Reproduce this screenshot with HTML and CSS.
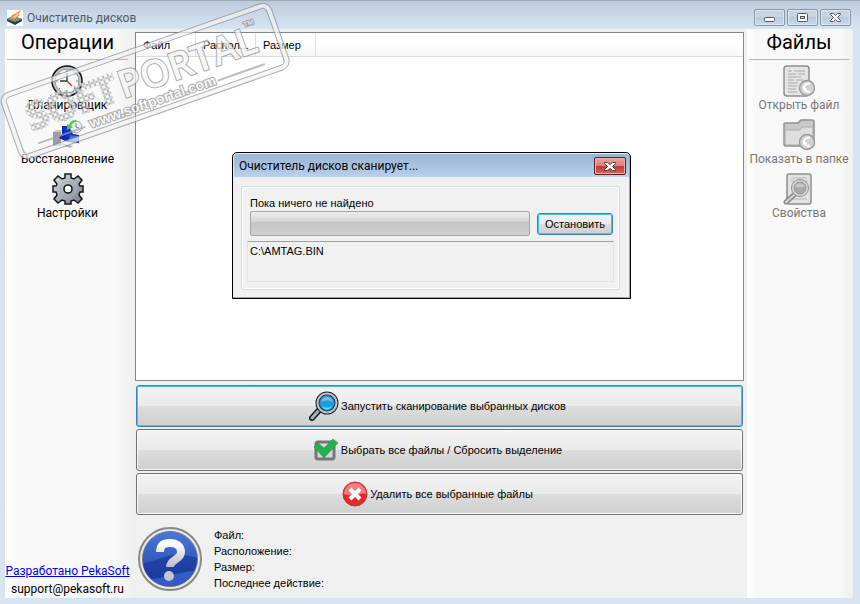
FILE: index.html
```html
<!DOCTYPE html>
<html lang="ru">
  <head>
    <meta charset="UTF-8" />
    <meta name="viewport" content="width=device-width, initial-scale=1.0" />
    <title>Очиститель дисков</title>
    <link rel="stylesheet" href="styles.css">
  </head>
  <body>
    <div class="window">
      <header class="titlebar">
        <svg class="app-icon" width="16" height="16" viewBox="0 0 16 16">
          <rect width="16" height="16" fill="#fff" />
          <path d="M0 9l6-3 9 3v2l-7 4-8-4z" fill="#2f3b40" />
          <path d="M0 9l6-3 9 3-7 3z" fill="#7d9390" />
          <path d="M4 9l1-4 4-2 5-3-2 4 1 1-5 4z" fill="#f0953a" />
          <path d="M6 7l5-4 1 1-4 4z" fill="#fbd58a" />
        </svg>
        <h1 class="title">Очиститель дисков</h1>
        <div class="controls">
          <button type="button" class="control" aria-label="Свернуть">
            <svg width="29" height="15" viewBox="0 0 29 15">
              <rect x="9.500" y="7.500" width="10" height="4" rx="1" fill="#fff" stroke="#535666" />
            </svg>
          </button>
          <button type="button" class="control" aria-label="Развернуть">
            <svg width="29" height="15" viewBox="0 0 29 15">
              <rect x="9.500" y="3.500" width="10" height="8" rx="1" fill="#fff" stroke="#535666" />
              <rect x="12.500" y="6.500" width="4" height="2" fill="#c5d3e2" stroke="#535666" />
            </svg>
          </button>
          <button type="button" class="control" aria-label="Закрыть">
            <svg width="29" height="15" viewBox="0 0 29 15">
              <path d="M9.500 3.500h3l2 2 2-2h3v1l-3 3 3 3v1h-3l-2-2-2 2h-3v-1l3-3-3-3z" fill="#fff" stroke="#535666" />
            </svg>
          </button>
        </div>
      </header>

      <div class="content">
        <nav class="sidebar sidebar-left">
          <h2 class="heading">Операции</h2>
          <button type="button" class="item">
            <svg width="32" height="32" viewBox="0 0 32 32">
              <circle cx="16" cy="16" r="15" fill="#bfc5cc" stroke="#111" stroke-width="1.500" />
              <circle cx="16" cy="16" r="12" fill="#f4f5f7" stroke="#8b9097" />
              <path d="M16 5v2M16 25v2M5 16h2M25 16h2M8 8l1 1M24 8l-1 1M8 24l1-1M24 24l-1-1" stroke="#777" />
              <path d="M16 8v8H9" fill="none" stroke="#333" stroke-width="1.300" />
              <path d="M16 16l5 5" stroke="#e02020" stroke-width="1.300" />
            </svg>
            <span>Планировщик</span>
          </button>
          <button type="button" class="item">
            <svg width="32" height="32" viewBox="0 0 32 32">
              <path d="M2 13h8v14H2z" fill="#9a9da2" />
              <path d="M2 13l3-2h6l-1 2z" fill="#c9cbce" />
              <path d="M10 24l12 3-3 2-9-3z" fill="#b5b7ba" />
              <path d="M11 7h7l4 8 6 1v8l-12-1-8-4 3-4z" fill="#0b24b4" />
              <path d="M12 8l5-1 4 9-6 3z" fill="#1232d0" />
              <path d="M19 16l8 1v6l-9-2z" fill="#3d6de8" />
              <circle cx="25" cy="8" r="6" fill="#e8edf0" stroke="#9ba4aa" />
              <path d="M25 4v4l3 1" fill="none" stroke="#7d8790" />
              <path d="M25 1c-5 0-6 3-7 5l-2-1 0 6 6-3-2-1c1-2 2-4 5-4z" fill="#3fd12c" />
            </svg>
            <span>Восстановление</span>
          </button>
          <button type="button" class="item">
            <svg width="32" height="32" viewBox="0 0 32 32">
              <defs>
                <linearGradient id="steel" x1="0" y1="0" x2="1" y2="1">
                  <stop offset="0" stop-color="#dde0e5" />
                  <stop offset="0.500" stop-color="#aab0ba" />
                  <stop offset="1" stop-color="#747c88" />
                </linearGradient>
              </defs>
              <path d="M13 1h6v4l3 1 4-3 4 4-3 4 1 2h3v6h-3l-1 3 3 4-4 4-4-3-3 1v3h-6v-3l-3-1-4 3-4-4 3-4-1-3H1v-6h3l1-2-3-4 4-4 4 3 3-1z" fill="url(#steel)" stroke="#15171a" stroke-width="1.500" />
              <circle cx="16" cy="16" r="8" fill="none" stroke="#a7aeb8" />
              <circle cx="16" cy="16" r="4" fill="#fff" stroke="#15171a" stroke-width="1.600" />
            </svg>
            <span>Настройки</span>
          </button>
          <footer class="credits">
            <a href="#">Разработано PekaSoft</a>
            <span>support@pekasoft.ru</span>
          </footer>
        </nav>

        <main class="main">
          <div class="list">
            <table class="files">
              <thead>
                <tr>
                  <th>Файл</th>
                  <th>Распол...</th>
                  <th>Размер</th>
                  <td></td>
                </tr>
              </thead>
              <tbody></tbody>
            </table>
          </div>

          <div class="actions">
            <button type="button" class="action action-default">
              <svg width="30" height="30" viewBox="0 0 30 30">
                <path d="M3 27l9-10" stroke="#17191c" stroke-width="6" stroke-linecap="round" />
                <path d="M3 27l9-10" stroke="#aab2be" stroke-width="3" stroke-linecap="round" />
                <circle cx="18" cy="12" r="9.500" fill="#b9d7ea" stroke="#1e2125" stroke-width="4" />
                <circle cx="18" cy="12" r="9.500" fill="none" stroke="#c3c7cc" stroke-width="2" />
                <circle cx="18" cy="12" r="7.500" fill="#1c9fdf" stroke="#176597" />
                <path d="M12 11c1-7 11-7 12 0-3-2-9-2-12 0z" fill="#7fb4e8" />
                <path d="M13 15c3 2 7 2 10 0-2 5-8 5-10 0z" fill="#4fdcfb" />
              </svg>
              <span>Запустить сканирование выбранных дисков</span>
            </button>
            <button type="button" class="action">
              <svg width="26" height="26" viewBox="0 0 26 26">
                <rect x="3" y="5" width="18" height="17" rx="2" fill="#d7d7d7" stroke="#73767a" stroke-width="3" />
                <path d="M1 10l4-4 6 5 9-9 5 4-14 15z" fill="#22b14c" stroke="#1a9a3c" stroke-width=".5" />
              </svg>
              <span>Выбрать все файлы / Сбросить выделение</span>
            </button>
            <button type="button" class="action">
              <svg width="26" height="26" viewBox="0 0 26 26">
                <circle cx="13" cy="13" r="12" fill="#e02b2b" stroke="#c93434" />
                <path d="M2 13a11 11 0 0 1 22 0c-5-2-8 4-22 0z" fill="#ee7d7d" />
                <path d="M8 8l10 10M18 8L8 18" stroke="#fff" stroke-width="4" />
              </svg>
              <span>Удалить все выбранные файлы</span>
            </button>
          </div>

          <section class="info">
            <svg width="64" height="64" viewBox="0 0 64 64">
              <defs>
                <linearGradient id="blue" x1="0" y1="0" x2="0" y2="1">
                  <stop offset="0" stop-color="#4a78dc" />
                  <stop offset="1" stop-color="#1d3fa4" />
                </linearGradient>
                <linearGradient id="mark" x1="0" y1="0" x2="0" y2="1">
                  <stop offset="0" stop-color="#fff" />
                  <stop offset="1" stop-color="#b9bcc4" />
                </linearGradient>
              </defs>
              <circle cx="32" cy="32" r="31" fill="#e9e9e9" stroke="#888" stroke-width="2" />
              <circle cx="32" cy="32" r="27.500" fill="url(#blue)" stroke="#6e7684" />
              <path d="M5 36c12-1 22-8 32-8s17 1 22 3c0 15-12 28-27 28S5 48 5 36z" fill="#14349a" opacity=".6" />
              <path d="M13 52c14-1 28-7 43-8-4 9-14 15-24 15-7 0-14-2-19-7z" fill="#3c63d0" opacity=".8" />
              <path d="M22 25c0-7 4-9 10-9s11 3 11 9c0 8-11 7-11 15" fill="none" stroke="url(#mark)" stroke-width="8" />
              <circle cx="31" cy="49" r="5" fill="#c5c7cd" />
            </svg>
            <ul class="details">
              <li>Файл:</li>
              <li>Расположение:</li>
              <li>Размер:</li>
              <li>Последнее действие:</li>
            </ul>
          </section>
        </main>

        <nav class="sidebar sidebar-right">
          <h2 class="heading">Файлы</h2>
          <button type="button" class="item" disabled>
            <svg width="32" height="32" viewBox="0 0 32 32">
              <rect x="1" y="1" width="25" height="30" rx="3" fill="#e4e4e4" stroke="#8f8f8f" stroke-width="1.500" />
              <path d="M5 6h4M11 6h11M5 9h8M15 9h7M5 12h13M5 15h6M13 15h7M5 18h10M5 21h9M5 24h8M5 27h9" stroke="#aaa" />
              <circle cx="24" cy="23" r="7.500" fill="#d2d2d2" stroke="#999" stroke-width="1.300" />
              <path d="M27 19c-5-1-8 3-5 7l5 1M22 26l1-3" fill="none" stroke="#fff" stroke-width="2" />
            </svg>
            <span>Открыть файл</span>
          </button>
          <button type="button" class="item" disabled>
            <svg width="32" height="32" viewBox="0 0 32 32">
              <path d="M1 5q0-1 1-1h13l3-3h11q2 0 2 2v22q0 2-2 2H3q-2 0-2-2z" fill="#c9c9c9" stroke="#8f8f8f" stroke-width="1.500" />
              <path d="M2 11h15l2-3h11v17q0 1-1 1H3q-1 0-1-1z" fill="#dedede" stroke="#aaa" />
              <circle cx="24" cy="23" r="7.500" fill="#d2d2d2" stroke="#999" stroke-width="1.300" />
              <path d="M27 19c-5-1-8 3-5 7l5 1M22 26l1-3" fill="none" stroke="#fff" stroke-width="2" />
            </svg>
            <span>Показать в папке</span>
          </button>
          <button type="button" class="item" disabled>
            <svg width="32" height="32" viewBox="0 0 32 32">
              <rect x="4" y="1" width="24" height="30" rx="2" fill="#e2e2e2" stroke="#8f8f8f" stroke-width="1.500" />
              <path d="M8 5h16M8 8h3M22 8h3M8 26h16" stroke="#bbb" />
              <path d="M3 29l8-7" stroke="#8c8c8c" stroke-width="5" stroke-linecap="round" />
              <path d="M3 29l8-7" stroke="#d5d5d5" stroke-width="2" stroke-linecap="round" />
              <circle cx="17" cy="15" r="8.500" fill="#dadada" stroke="#8f8f8f" />
              <circle cx="17" cy="15" r="6" fill="#aaa" stroke="#8f8f8f" />
              <path d="M12 14c1-5 9-5 10 0z" fill="#c6c6c6" />
            </svg>
            <span>Свойства</span>
          </button>
        </nav>
      </div>

      <svg class="stamp" width="290" height="170" viewBox="0 0 290 170" aria-hidden="true">
        <defs>
          <pattern id="dots" width="5" height="5" patternUnits="userSpaceOnUse">
            <rect x=".5" y=".5" width="4" height="4" rx="1" fill="#f8f8f8" stroke="#888" stroke-width=".8" />
          </pattern>
        </defs>
        <g transform="translate(-2 95) rotate(-19.300)">
          <rect class="stamp-edge" x="3" y="3" width="281" height="65" rx="7" />
          <rect class="stamp-fill" x="3" y="3" width="281" height="65" rx="7" />
          <text class="stamp-dots" x="20" y="45">SOFT</text>
          <text class="stamp-name" x="117" y="45">PORTAL</text>
          <text class="stamp-tm" x="254" y="21">™</text>
          <text class="stamp-site" x="77" y="62">www.softportal.com</text>
          <path class="stamp-line" d="M22 59h50M212 59h50" />
        </g>
      </svg>

      <div class="dialog" role="dialog" aria-labelledby="dialog-title">
        <div class="dialog-bar">
          <h2 class="dialog-title" id="dialog-title">Очиститель дисков сканирует...</h2>
          <button type="button" class="dialog-close" aria-label="Закрыть">
            <svg width="30" height="16" viewBox="0 0 30 16">
              <path d="M9.500 4.500h3l2.500 2 2.500-2h3v1l-3 3 3 3v1h-3l-2.500-2-2.500 2h-3v-1l3-3-3-3z" fill="#fff" stroke="#63403f" />
            </svg>
          </button>
        </div>
        <div class="dialog-body">
          <div class="group">
            <label for="scan">Пока ничего не найдено</label>
            <div class="scan-row">
              <progress id="scan" value="0" max="100"></progress>
              <button type="button" class="stop">Остановить</button>
            </div>
            <div class="path">C:\AMTAG.BIN</div>
          </div>
        </div>
      </div>
    </div>
  </body>
</html>
```
FILE: styles.css
```css
* {
  box-sizing: border-box;
}

body {
  margin: 0;
  font-family: "Liberation Sans", Arial, sans-serif;
  font-size: 11px;
  color: #000;
}

h1,
h2,
ul {
  margin: 0;
  padding: 0;
  font-weight: normal;
}

button {
  font: inherit;
  color: inherit;
}

svg {
  display: block;
  flex: none;
}

.window {
  position: relative;
  display: flex;
  flex-direction: column;
  min-height: 100vh;
  padding: 0 7px 6px 5px;
  background: #d7e4f2;
  border-top: 1px solid #9aa7b5;
}

.titlebar {
  display: flex;
  align-items: center;
  height: 28px;
  margin: 0 -7px 0 -5px;
  padding: 5px 9px 0 7px;
  background: linear-gradient(#bccbdc, #d7e4f2);
}

.title {
  flex: 1;
  padding-left: 4px;
  font-family: Roboto, "Open Sans", sans-serif;
  font-size: 12px;
  line-height: 16px;
  color: #4f5a66;
}

.controls {
  display: flex;
  gap: 2px;
}

.control {
  padding: 0;
  border: 1px solid #8795a8;
  border-radius: 2px;
  background: linear-gradient(#c6d4e4 50%, #b9c9dc 50%, #cbd9e8);
  box-shadow: inset 0 0 0 1px #dce7f2;
}

/* columns */
.content {
  flex: 1;
  display: grid;
  grid-template-columns: 130px 1fr 106px;
  background: #f0f0f0;
}

.sidebar {
  display: flex;
  flex-direction: column;
  align-items: center;
  font-family: Roboto, "Open Sans", sans-serif;
  font-size: 12px;
}

.sidebar-left {
  padding: 0 7px 0 2px;
  background: linear-gradient(90deg, #fff, #f8f8f8 10%, #f8f8f8 85%, #efefef);
}

.sidebar-right {
  padding: 0 4px 0 2px;
  background: linear-gradient(90deg, #fff, #f8f8f8 8%, #f8f8f8 88%, #f0f0f0);
}

.heading {
  align-self: stretch;
  height: 31px;
  margin-bottom: 5px;
  border-bottom: 1px solid #b4b4b4;
  font-size: 20px;
  line-height: 27px;
  text-align: center;
}

.item {
  display: flex;
  flex-direction: column;
  align-items: center;
  height: 54px;
  padding: 0;
  border: none;
  background: none;
  line-height: 16px;
  white-space: nowrap;
}

.item:disabled {
  color: #777;
}

.credits {
  display: flex;
  flex-direction: column;
  align-items: center;
  margin-top: auto;
  line-height: 18px;
  white-space: nowrap;
}

.credits a {
  color: #00f;
}

/* file list and actions */
.main {
  display: flex;
  flex-direction: column;
  padding: 3px 3px 7px 0;
}

.list {
  flex: 1;
  border: 1px solid #828790;
  background: #fff;
}

.files {
  width: 100%;
  border-spacing: 0;
  table-layout: fixed;
}

.files th,
.files td {
  height: 24px;
  padding: 0 0 0 7px;
  border-bottom: 1px solid #d9dbde;
  background: linear-gradient(#fff 50%, #f5f6f8);
  font-weight: normal;
  text-align: left;
}

.files th {
  width: 60px;
  border-right: 1px solid #dcdfe3;
}

.actions {
  display: grid;
  gap: 2px;
  padding: 4px 1px 0;
}

.action {
  display: flex;
  align-items: center;
  justify-content: center;
  gap: 2px;
  height: 42px;
  padding: 0 4px 0 0;
  border: 1px solid #707070;
  border-radius: 3px;
  background: linear-gradient(#f2f2f2, #ebebeb 50%, #dddddd 50%, #cfcfcf);
  box-shadow: inset 0 0 0 1px #fbfbfb;
}

.action-default,
.stop {
  border-color: #3c7fb1;
  box-shadow: inset 0 0 0 1px #3fc8f2;
}

.info {
  display: flex;
  gap: 12px;
  padding: 12px 3px 0;
}

.details {
  list-style: none;
  line-height: 16px;
}

/* scanning dialog */
.dialog {
  position: absolute;
  top: 151px;
  left: 232px;
  width: 399px;
  border: 1px solid #000;
  border-radius: 5px 5px 0 0;
  background: #b9d1ea;
  box-shadow: inset -1px -1px 0 #35cdf3, inset 1px 1px 0 #e4eef8;
  padding: 1px;
}

.dialog-bar {
  display: flex;
  align-items: center;
  justify-content: space-between;
  height: 23px;
  padding: 0 3px 0 5px;
  border-radius: 4px 4px 0 0;
  background: linear-gradient(#99b4d1, #b9d1ea);
}

.dialog-title {
  font-family: Roboto, "Open Sans", sans-serif;
  font-size: 12px;
  line-height: 16px;
}

.dialog-close {
  padding: 0;
  border: 1px solid #5a1f24;
  border-radius: 2px;
  background: linear-gradient(#e8a49b, #dc8078 50%, #bd3c30 50%, #d2655a);
  box-shadow: inset 0 0 0 1px #eeb5af;
}

.dialog-body {
  padding: 9px 9px 7px 7px;
  background: #f0f0f0;
}

.group {
  padding: 8px 5px 7px;
  border: 1px solid #d0dbe4;
  border-radius: 3px;
  box-shadow: inset 0 0 0 1px #fff;
}

.group label {
  display: block;
  padding-left: 3px;
  line-height: 16px;
}

.scan-row {
  display: flex;
  align-items: center;
  gap: 7px;
  padding: 0 1px 0 3px;
}

progress {
  flex: 1;
  appearance: none;
  height: 25px;
  border: 1px solid #a5a5a5;
  border-radius: 2px;
  background: linear-gradient(#ececec, #d8d8d8 40%, #c6c6c6 45%, #cfcfcf);
}

progress::-webkit-progress-bar {
  background: none;
}

.stop {
  width: 76px;
  height: 22px;
  padding: 0;
  border: 1px solid #3c7fb1;
  border-radius: 3px;
  background: linear-gradient(#f2f2f2, #ebebeb 50%, #dddddd 50%, #cfcfcf);
}

.path {
  height: 41px;
  margin-top: 5px;
  padding-left: 2px;
  border: 1px solid #dde4ea;
  border-top-color: #a0a0a0;
  line-height: 18px;
}

/* stamp over the window */
.stamp {
  position: absolute;
  top: -1px;
  left: 0;
  pointer-events: none;
  opacity: 0.7;
}

.stamp-edge {
  fill: none;
  stroke: #8c8c8c;
  stroke-width: 6;
}

.stamp-fill {
  fill: none;
  stroke: #f3f3f3;
  stroke-width: 4;
}

.stamp-dots,
.stamp-name {
  font-family: "Open Sans", sans-serif;
  font-size: 38px;
}

.stamp-dots {
  font-weight: bold;
  fill: url(#dots);
  stroke: url(#dots);
  stroke-width: 3;
}

.stamp-name,
.stamp-tm,
.stamp-site {
  fill: #f5f5f5;
  stroke: #888;
  stroke-width: 2;
  paint-order: stroke;
}

.stamp-name {
  font-weight: 600;
}

.stamp-tm {
  font-size: 12px;
}

.stamp-site {
  font-size: 14px;
  font-weight: bold;
}

.stamp-line {
  stroke: #a0a0a0;
  stroke-width: 2;
}
```
